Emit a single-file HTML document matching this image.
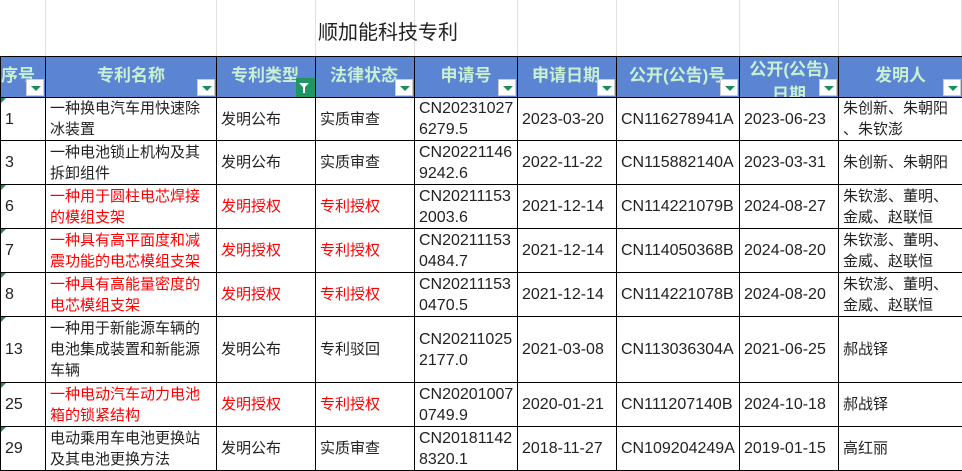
<!DOCTYPE html>
<html><head><meta charset="utf-8"><style>
*{margin:0;padding:0;box-sizing:border-box}
body{width:962px;height:471px;overflow:hidden;background:#fff;font-family:"Liberation Sans","Noto Sans CJK SC",sans-serif;position:relative}
.g{position:absolute;top:0;height:56px;width:1px;background:#e1e1e1}
.title{position:absolute;left:318px;top:16px;font-size:20px;color:#222}
table{position:absolute;left:0;top:56px;border-collapse:collapse;table-layout:fixed;width:962px}
td{border:1px solid #000;font-size:15px;line-height:21px;color:#222;padding:0 1px 0 4px;vertical-align:middle;overflow:hidden;position:relative;line-break:anywhere;word-break:break-all}
td.n{font-size:16px}
td.w{padding-right:14px}
tr.h td{background:#5b85d2;color:#c8f0d2;font-weight:bold;font-size:17px;text-align:center;height:41px;line-height:21px;padding:0 2px 3px 2px}
.r{color:#f00}
.btn{position:absolute;right:1px;bottom:1px;width:18px;height:17px;background:#fff;border:1px solid #ccc}
.btn:after{content:"";position:absolute;left:4px;top:6px;border-left:5px solid transparent;border-right:5px solid transparent;border-top:5px solid #1a8f5a}
.fbtn{position:absolute;right:0;bottom:0;width:19px;height:19px;background:#1f9664}
.fbtn:before{content:"";position:absolute;left:3px;top:5px;border-left:5px solid transparent;border-right:5px solid transparent;border-top:5px solid #fff}
.fbtn:after{content:"";position:absolute;left:7px;top:9px;width:2px;height:6px;background:#fff}
.tri{position:absolute;left:0;top:0;border-right:5px solid transparent;border-top:5px solid #1a8f5a}
.dh{height:40px;overflow:hidden;line-height:25px;padding-top:0}
</style></head><body>
<div class="g" style="left:45px"></div><div class="g" style="left:216px"></div><div class="g" style="left:315px"></div><div class="g" style="left:414px"></div><div class="g" style="left:517px"></div><div class="g" style="left:616px"></div><div class="g" style="left:739px"></div><div class="g" style="left:838px"></div><div class="g" style="left:961px"></div>
<div class="title">顺加能科技专利</div>
<table>
<colgroup><col style="width:45px"><col style="width:171px"><col style="width:99px"><col style="width:99px"><col style="width:103px"><col style="width:99px"><col style="width:123px"><col style="width:99px"><col style="width:124px"></colgroup>
<tr class="h"><td style="padding-left:0;text-align:left">序号<span class="btn"></span></td><td>专利名称<span class="btn"></span></td><td style="text-align:left;padding-left:14px">专利类型<span class="fbtn"></span></td><td style="text-align:left;padding-left:14px">法律状态<span class="btn"></span></td><td>申请号<span class="btn"></span></td><td style="text-align:left;padding-left:14px">申请日期<span class="btn"></span></td><td style="text-align:left;padding-left:12px">公开(公告)号<span class="btn"></span></td><td style="padding:0;vertical-align:top"><div class="dh">公开(公告)<br>日期</div><span class="btn"></span></td><td>发明人<span class="btn"></span></td></tr>
<tr style="height:43px"><td class="n"><span class="tri"></span>1</td><td class="w">一种换电汽车用快速除冰装置</td><td>发明公布</td><td>实质审查</td><td class="n">CN202310276279.5</td><td class="n">2023-03-20</td><td class="n">CN116278941A</td><td class="n">2023-06-23</td><td>朱创新、朱朝阳、朱钦澎</td></tr>
<tr style="height:44px"><td class="n">3</td><td class="w">一种电池锁止机构及其拆卸组件</td><td>发明公布</td><td>实质审查</td><td class="n">CN202211469242.6</td><td class="n">2022-11-22</td><td class="n">CN115882140A</td><td class="n">2023-03-31</td><td>朱创新、朱朝阳</td></tr>
<tr style="height:44px"><td class="n"><span class="tri"></span>6</td><td class="r w">一种用于圆柱电芯焊接的模组支架</td><td class="r">发明授权</td><td class="r">专利授权</td><td class="n">CN202111532003.6</td><td class="n">2021-12-14</td><td class="n">CN114221079B</td><td class="n">2024-08-27</td><td>朱钦澎、董明、金威、赵联恒</td></tr>
<tr style="height:44px"><td class="n"><span class="tri"></span>7</td><td class="r w">一种具有高平面度和减震功能的电芯模组支架</td><td class="r">发明授权</td><td class="r">专利授权</td><td class="n">CN202111530484.7</td><td class="n">2021-12-14</td><td class="n">CN114050368B</td><td class="n">2024-08-20</td><td>朱钦澎、董明、金威、赵联恒</td></tr>
<tr style="height:44px"><td class="n"><span class="tri"></span>8</td><td class="r w">一种具有高能量密度的电芯模组支架</td><td class="r">发明授权</td><td class="r">专利授权</td><td class="n">CN202111530470.5</td><td class="n">2021-12-14</td><td class="n">CN114221078B</td><td class="n">2024-08-20</td><td>朱钦澎、董明、金威、赵联恒</td></tr>
<tr style="height:66px"><td class="n"><span class="tri"></span>13</td><td class="w">一种用于新能源车辆的电池集成装置和新能源车辆</td><td>发明公布</td><td>专利驳回</td><td class="n">CN202110252177.0</td><td class="n">2021-03-08</td><td class="n">CN113036304A</td><td class="n">2021-06-25</td><td>郝战铎</td></tr>
<tr style="height:44px"><td class="n"><span class="tri"></span>25</td><td class="r w">一种电动汽车动力电池箱的锁紧结构</td><td class="r">发明授权</td><td class="r">专利授权</td><td class="n">CN202010070749.9</td><td class="n">2020-01-21</td><td class="n">CN111207140B</td><td class="n">2024-10-18</td><td>郝战铎</td></tr>
<tr style="height:44px"><td class="n"><span class="tri"></span>29</td><td class="w">电动乘用车电池更换站及其电池更换方法</td><td>发明公布</td><td>实质审查</td><td class="n">CN201811428320.1</td><td class="n">2018-11-27</td><td class="n">CN109204249A</td><td class="n">2019-01-15</td><td>高红丽</td></tr>
</table>
</body></html>
